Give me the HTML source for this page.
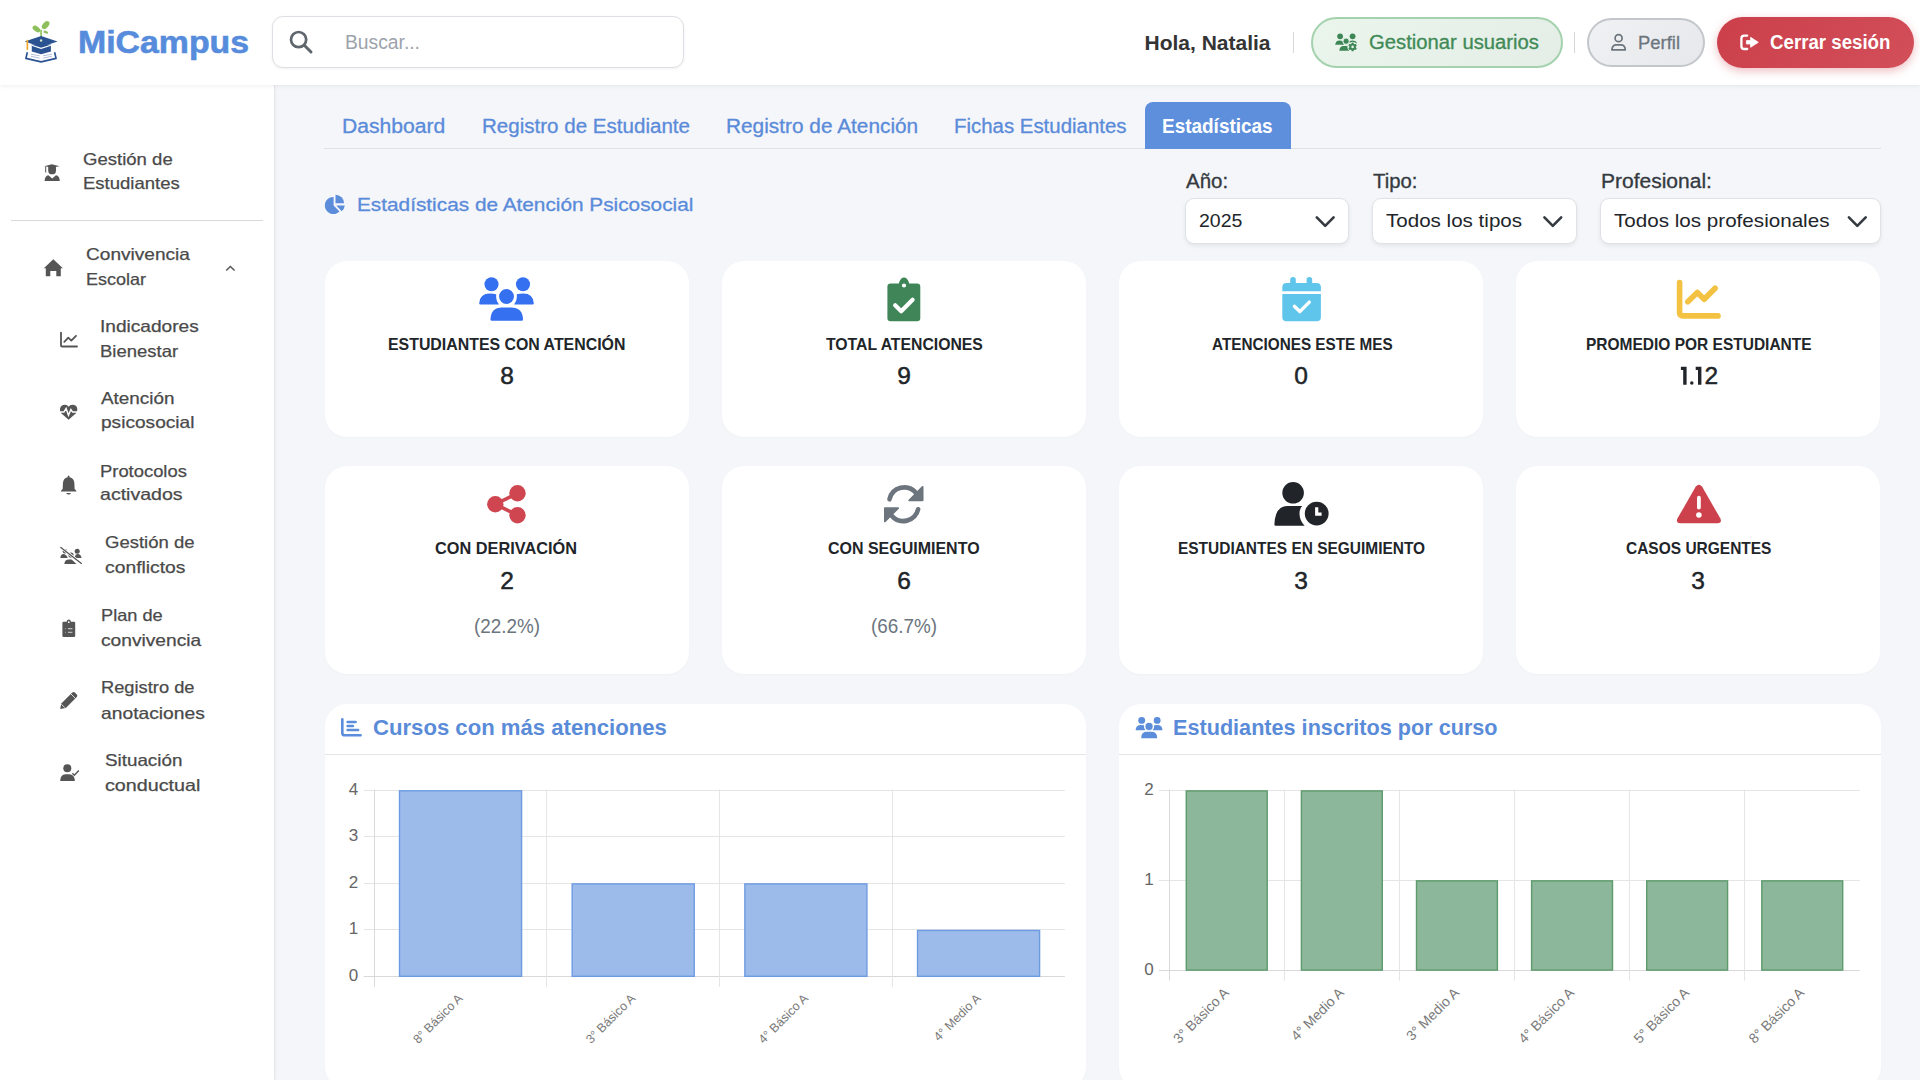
<!DOCTYPE html>
<html lang="es"><head><meta charset="utf-8"><title>MiCampus - Estadísticas</title>
<style>
html,body{margin:0;padding:0;}
body{width:1920px;height:1080px;overflow:hidden;position:relative;background:#f5f6fa;font-family:"Liberation Sans",sans-serif;}
#header{position:absolute;left:0;top:0;width:1920px;height:85px;background:#fff;box-shadow:0 1px 4px rgba(0,0,0,0.07);z-index:2}
#sidebar{position:absolute;left:0;top:85px;width:274px;height:995px;background:#fff;border-right:1px solid #e4e6ea;box-shadow:1px 0 3px rgba(0,0,0,0.03);z-index:1}
.box,.sep{position:absolute;box-sizing:content-box;z-index:3}
.card{position:absolute;background:#fff;border-radius:22px;box-shadow:0 1px 3px rgba(0,0,0,0.02);z-index:1}
.t{position:absolute;white-space:nowrap;line-height:1;z-index:5;transform-origin:0 0}
#ov{position:absolute;left:0;top:0;z-index:4}
</style></head><body>
<div id="header"></div><div id="sidebar"></div><div class="sep" style="left:11px;top:220px;width:252px;height:1px;background:#d9d9d9"></div><div class="box" style="left:272px;top:16px;width:410px;height:50px;border:1px solid #dcdfe3;border-radius:11px;background:#fff;box-shadow:0 1px 3px rgba(0,0,0,0.06)"></div><div class="box" style="left:1293px;top:32px;width:1px;height:21px;background:#d6d6d6"></div><div class="box" style="left:1574px;top:32px;width:1px;height:21px;background:#d6d6d6"></div><div class="box" style="left:1311px;top:17px;width:248px;height:47px;border:2px solid #a5d2ae;border-radius:26px;background:linear-gradient(135deg,#eaf5ec,#e4eee7)"></div><div class="box" style="left:1587px;top:18px;width:114px;height:45px;border:2px solid #c3c7cb;border-radius:26px;background:linear-gradient(135deg,#f0f1f3,#e6e8eb)"></div><div class="box" style="left:1717px;top:17px;width:197px;height:51px;border-radius:26px;background:linear-gradient(135deg,#cb3f4a,#d24f5a);box-shadow:0 3px 10px rgba(207,68,79,0.35)"></div><div class="box" style="left:324px;top:148px;width:1557px;height:1px;background:#dee2e6"></div><div class="box" style="left:1145px;top:102px;width:146px;height:47px;background:#5d8fdd;border-radius:8px 8px 0 0"></div><div class="box" style="left:1185px;top:198px;width:162px;height:44px;border:1px solid #dfe2e6;border-radius:9px;background:#fff;box-shadow:0 2px 4px rgba(0,0,0,0.07)"></div><div class="box" style="left:1372px;top:198px;width:203px;height:44px;border:1px solid #dfe2e6;border-radius:9px;background:#fff;box-shadow:0 2px 4px rgba(0,0,0,0.07)"></div><div class="box" style="left:1600px;top:198px;width:279px;height:44px;border:1px solid #dfe2e6;border-radius:9px;background:#fff;box-shadow:0 2px 4px rgba(0,0,0,0.07)"></div><div class="card" style="left:325px;top:261px;width:364px;height:176px"></div><div class="card" style="left:325px;top:466px;width:364px;height:208px"></div><div class="card" style="left:722px;top:261px;width:364px;height:176px"></div><div class="card" style="left:722px;top:466px;width:364px;height:208px"></div><div class="card" style="left:1119px;top:261px;width:364px;height:176px"></div><div class="card" style="left:1119px;top:466px;width:364px;height:208px"></div><div class="card" style="left:1516px;top:261px;width:364px;height:176px"></div><div class="card" style="left:1516px;top:466px;width:364px;height:208px"></div><div class="card" style="left:325px;top:704px;width:761px;height:385px"></div><div class="card" style="left:1119px;top:704px;width:762px;height:385px"></div><div class="box" style="left:325px;top:754px;width:761px;height:1px;background:#e3e5e8"></div><div class="box" style="left:1119px;top:754px;width:762px;height:1px;background:#e3e5e8"></div><div class="t" style="left:78.00px;top:26.76px;font-size:31px;color:#578cdc;font-weight:700;transform:scaleX(1.0913);-webkit-text-stroke:0.6px #578cdc;">MiCampus</div><div class="t" style="left:345.00px;top:33.00px;font-size:19.5px;color:#9ca3ab;transform:scaleX(0.9881);">Buscar...</div><div class="t" style="left:1144.50px;top:31.63px;font-size:21px;color:#343434;font-weight:700;">Hola, Natalia</div><div class="t" style="left:1369.00px;top:32.90px;font-size:19.5px;color:#3f8a56;transform:scaleX(1.0385);-webkit-text-stroke:0.3px #3f8a56;">Gestionar usuarios</div><div class="t" style="left:1638.00px;top:32.62px;font-size:19px;color:#6c757d;transform:scaleX(0.9700);-webkit-text-stroke:0.3px #6c757d;">Perfil</div><div class="t" style="left:1769.60px;top:32.50px;font-size:19.5px;color:#ffffff;font-weight:700;transform:scaleX(0.9578);">Cerrar sesión</div><div class="t" style="left:83.30px;top:151.03px;font-size:16.5px;color:#4a4a4a;transform:scaleX(1.1241);-webkit-text-stroke:0.25px #4a4a4a;">Gestión de</div><div class="t" style="left:83.30px;top:175.03px;font-size:16.5px;color:#4a4a4a;transform:scaleX(1.1218);-webkit-text-stroke:0.25px #4a4a4a;">Estudiantes</div><div class="t" style="left:85.80px;top:245.53px;font-size:16.5px;color:#4a4a4a;transform:scaleX(1.1557);-webkit-text-stroke:0.25px #4a4a4a;">Convivencia</div><div class="t" style="left:85.80px;top:271.03px;font-size:16.5px;color:#4a4a4a;transform:scaleX(1.0909);-webkit-text-stroke:0.25px #4a4a4a;">Escolar</div><div class="t" style="left:100.30px;top:318.03px;font-size:16.5px;color:#4a4a4a;transform:scaleX(1.1571);-webkit-text-stroke:0.25px #4a4a4a;">Indicadores</div><div class="t" style="left:100.30px;top:343.23px;font-size:16.5px;color:#4a4a4a;transform:scaleX(1.1205);-webkit-text-stroke:0.25px #4a4a4a;">Bienestar</div><div class="t" style="left:100.60px;top:390.33px;font-size:16.5px;color:#4a4a4a;transform:scaleX(1.1449);-webkit-text-stroke:0.25px #4a4a4a;">Atención</div><div class="t" style="left:100.60px;top:414.03px;font-size:16.5px;color:#4a4a4a;transform:scaleX(1.1574);-webkit-text-stroke:0.25px #4a4a4a;">psicosocial</div><div class="t" style="left:99.90px;top:462.83px;font-size:16.5px;color:#4a4a4a;transform:scaleX(1.1141);-webkit-text-stroke:0.25px #4a4a4a;">Protocolos</div><div class="t" style="left:99.90px;top:486.03px;font-size:16.5px;color:#4a4a4a;transform:scaleX(1.1851);-webkit-text-stroke:0.25px #4a4a4a;">activados</div><div class="t" style="left:104.50px;top:534.03px;font-size:16.5px;color:#4a4a4a;transform:scaleX(1.1216);-webkit-text-stroke:0.25px #4a4a4a;">Gestión de</div><div class="t" style="left:104.50px;top:559.03px;font-size:16.5px;color:#4a4a4a;transform:scaleX(1.1701);-webkit-text-stroke:0.25px #4a4a4a;">conflictos</div><div class="t" style="left:100.50px;top:606.73px;font-size:16.5px;color:#4a4a4a;transform:scaleX(1.1018);-webkit-text-stroke:0.25px #4a4a4a;">Plan de</div><div class="t" style="left:100.50px;top:631.73px;font-size:16.5px;color:#4a4a4a;transform:scaleX(1.1624);-webkit-text-stroke:0.25px #4a4a4a;">convivencia</div><div class="t" style="left:100.50px;top:679.03px;font-size:16.5px;color:#4a4a4a;transform:scaleX(1.1078);-webkit-text-stroke:0.25px #4a4a4a;">Registro de</div><div class="t" style="left:100.50px;top:704.83px;font-size:16.5px;color:#4a4a4a;transform:scaleX(1.1674);-webkit-text-stroke:0.25px #4a4a4a;">anotaciones</div><div class="t" style="left:104.50px;top:752.03px;font-size:16.5px;color:#4a4a4a;transform:scaleX(1.1399);-webkit-text-stroke:0.25px #4a4a4a;">Situación</div><div class="t" style="left:104.50px;top:776.83px;font-size:16.5px;color:#4a4a4a;transform:scaleX(1.1955);-webkit-text-stroke:0.25px #4a4a4a;">conductual</div><div class="t" style="left:342.40px;top:115.67px;font-size:20px;color:#5a8bd9;transform:scaleX(1.0552);-webkit-text-stroke:0.3px #5a8bd9;">Dashboard</div><div class="t" style="left:481.70px;top:115.67px;font-size:20px;color:#5a8bd9;transform:scaleX(1.0277);-webkit-text-stroke:0.3px #5a8bd9;">Registro de Estudiante</div><div class="t" style="left:725.80px;top:115.67px;font-size:20px;color:#5a8bd9;transform:scaleX(1.0412);-webkit-text-stroke:0.3px #5a8bd9;">Registro de Atención</div><div class="t" style="left:953.50px;top:115.67px;font-size:20px;color:#5a8bd9;transform:scaleX(1.0207);-webkit-text-stroke:0.3px #5a8bd9;">Fichas Estudiantes</div><div class="t" style="left:1162.40px;top:115.67px;font-size:20px;color:#ffffff;font-weight:700;transform:scaleX(0.9477);">Estadísticas</div><div class="t" style="left:356.70px;top:195.17px;font-size:19px;color:#5a8bd9;transform:scaleX(1.0944);-webkit-text-stroke:0.3px #5a8bd9;">Estadísticas de Atención Psicosocial</div><div class="t" style="left:1185.70px;top:172.20px;font-size:19.5px;color:#343a40;transform:scaleX(1.0499);-webkit-text-stroke:0.3px #343a40;">Año:</div><div class="t" style="left:1372.70px;top:172.20px;font-size:19.5px;color:#343a40;transform:scaleX(1.0399);-webkit-text-stroke:0.3px #343a40;">Tipo:</div><div class="t" style="left:1600.80px;top:172.20px;font-size:19.5px;color:#343a40;transform:scaleX(1.0767);-webkit-text-stroke:0.3px #343a40;">Profesional:</div><div class="t" style="left:1198.70px;top:211.12px;font-size:19px;color:#212529;transform:scaleX(1.0260);">2025</div><div class="t" style="left:1385.50px;top:211.12px;font-size:19px;color:#212529;transform:scaleX(1.0827);">Todos los tipos</div><div class="t" style="left:1614.00px;top:211.12px;font-size:19px;color:#212529;transform:scaleX(1.0851);">Todos los profesionales</div><div class="t" style="left:387.80px;top:335.53px;font-size:16.5px;color:#212529;font-weight:700;transform:scaleX(0.9627);">ESTUDIANTES CON ATENCIÓN</div><div class="t" style="left:825.60px;top:335.53px;font-size:16.5px;color:#212529;font-weight:700;transform:scaleX(0.9561);">TOTAL ATENCIONES</div><div class="t" style="left:1211.60px;top:335.53px;font-size:16.5px;color:#212529;font-weight:700;transform:scaleX(0.9267);">ATENCIONES ESTE MES</div><div class="t" style="left:1586.00px;top:335.53px;font-size:16.5px;color:#212529;font-weight:700;transform:scaleX(0.9392);">PROMEDIO POR ESTUDIANTE</div><div class="t" style="left:435.40px;top:540.23px;font-size:16.5px;color:#212529;font-weight:700;transform:scaleX(0.9882);">CON DERIVACIÓN</div><div class="t" style="left:827.80px;top:540.23px;font-size:16.5px;color:#212529;font-weight:700;transform:scaleX(0.9687);">CON SEGUIMIENTO</div><div class="t" style="left:1177.80px;top:540.23px;font-size:16.5px;color:#212529;font-weight:700;transform:scaleX(0.9370);">ESTUDIANTES EN SEGUIMIENTO</div><div class="t" style="left:1626.00px;top:540.23px;font-size:16.5px;color:#212529;font-weight:700;transform:scaleX(0.9387);">CASOS URGENTES</div><div class="t" style="left:500.20px;top:363.76px;font-size:24.5px;color:#212529;-webkit-text-stroke:0.5px #212529;">8</div><div class="t" style="left:897.20px;top:363.76px;font-size:24.5px;color:#212529;-webkit-text-stroke:0.5px #212529;">9</div><div class="t" style="left:1294.20px;top:363.76px;font-size:24.5px;color:#212529;-webkit-text-stroke:0.5px #212529;">0</div><div class="t" style="left:1704.40px;top:363.86px;font-size:24.5px;color:#212529;-webkit-text-stroke:0.5px #212529;">2</div><div class="t" style="left:500.20px;top:568.86px;font-size:24.5px;color:#212529;-webkit-text-stroke:0.5px #212529;">2</div><div class="t" style="left:897.20px;top:568.86px;font-size:24.5px;color:#212529;-webkit-text-stroke:0.5px #212529;">6</div><div class="t" style="left:1294.20px;top:568.86px;font-size:24.5px;color:#212529;-webkit-text-stroke:0.5px #212529;">3</div><div class="t" style="left:1691.20px;top:568.86px;font-size:24.5px;color:#212529;-webkit-text-stroke:0.5px #212529;">3</div><div class="t" style="left:473.60px;top:616.07px;font-size:20px;color:#6c757d;transform:scaleX(0.9429);">(22.2%)</div><div class="t" style="left:871.00px;top:616.07px;font-size:20px;color:#6c757d;transform:scaleX(0.9429);">(66.7%)</div><div class="t" style="left:373.20px;top:716.68px;font-size:22px;color:#5a8bd9;font-weight:700;transform:scaleX(1.0055);">Cursos con más atenciones</div><div class="t" style="left:1173.40px;top:716.68px;font-size:22px;color:#5a8bd9;font-weight:700;transform:scaleX(0.9833);">Estudiantes inscritos por curso</div>
<svg id="ov" width="1920" height="1080" viewBox="0 0 1920 1080" font-family="Liberation Sans, sans-serif"><g transform="translate(20,15) scale(0.04907)"><ellipse cx="335" cy="285" rx="88" ry="52" transform="rotate(35 335 285)" fill="#8dc05c"/><ellipse cx="522" cy="205" rx="95" ry="58" transform="rotate(-48 522 205)" fill="#8dc05c"/><ellipse cx="525" cy="350" rx="50" ry="26" transform="rotate(25 525 350)" fill="#8dc05c"/><path d="M430 300 V520" stroke="#8dc05c" stroke-width="34"/><path d="M150 760 L430 800 L705 760 L735 885 L430 955 L120 885 Z" fill="#ffffff"/><path d="M150 760 L120 885 L430 955 L735 885 L705 760" fill="none" stroke="#2c5391" stroke-width="34" stroke-linejoin="round"/><path d="M220 800 L400 830 M220 840 L400 880 M470 830 L650 800 M470 880 L650 840" stroke="#a8b8d4" stroke-width="18"/><path d="M240 600 L630 600 L630 745 L430 800 L240 745 Z" fill="#2c5391"/><path d="M95 540 L430 430 L765 540 L430 650 Z" fill="#2c5391"/><path d="M240 615 L430 680 L630 615" stroke="#ffffff" stroke-width="22" fill="none"/><circle cx="430" cy="520" r="24" fill="#d8e8c8"/><path d="M150 520 V700" stroke="#f0a830" stroke-width="34" stroke-linecap="round"/></g><circle cx="298.6" cy="39.6" r="7.6" fill="none" stroke="#5f666d" stroke-width="2.7"/><path d="M304.3 45.3 L311 52" stroke="#5f666d" stroke-width="3" stroke-linecap="round"/><g fill="#3d8757"><circle cx="1340.1" cy="36.3" r="2.9"/><circle cx="1352.6" cy="36.3" r="2.9"/><path d="M1335.2 44.8 Q1335.6 40.4 1339.5 40.4 Q1341.6 40.4 1342.6 41.2 Q1342.8 43.5 1344 44.8 Z"/><path d="M1348.6 44.2 Q1349.6 43 1349.7 41 Q1350.7 40.4 1352.7 40.4 Q1356.4 40.4 1357 43.6 Z"/><circle cx="1346.1" cy="41.2" r="3.1" stroke="#e8f2ea" stroke-width="0.9"/><path d="M1339.3 50.8 Q1339.6 45.9 1343.5 45.9 L1348.6 45.9 Q1347.6 48.6 1349.8 50.8 Z"/></g><circle cx="1352.6" cy="46.9" r="5.2" fill="#e8f2ea"/><g transform="translate(1352.6 46.9)" fill="#3d8757"><circle r="3.2"/><rect x="-1.1" y="-4.3" width="2.2" height="2" rx="0.4" transform="rotate(0)"/><rect x="-1.1" y="-4.3" width="2.2" height="2" rx="0.4" transform="rotate(60)"/><rect x="-1.1" y="-4.3" width="2.2" height="2" rx="0.4" transform="rotate(120)"/><rect x="-1.1" y="-4.3" width="2.2" height="2" rx="0.4" transform="rotate(180)"/><rect x="-1.1" y="-4.3" width="2.2" height="2" rx="0.4" transform="rotate(240)"/><rect x="-1.1" y="-4.3" width="2.2" height="2" rx="0.4" transform="rotate(300)"/><circle r="1.3" fill="#e8f2ea"/></g><circle cx="1618.6" cy="38.2" r="3.5" fill="none" stroke="#6c757d" stroke-width="1.7"/><path d="M1611.9 49.9 Q1612.3 44.9 1616.3 44.9 H1620.9 Q1625 44.9 1625.3 49.9 Z" fill="none" stroke="#6c757d" stroke-width="1.7" stroke-linejoin="round"/><path d="M1747.2 35.6 H1744.2 Q1741.4 35.6 1741.4 38.4 V46.2 Q1741.4 49 1744.2 49 H1747.2" fill="none" stroke="#fff" stroke-width="2.3" stroke-linecap="round"/><path d="M1746.4 40.6 H1750.6 V37.3 L1758.3 42.3 L1750.6 47.3 V44 H1746.4 Z" fill="#fff" stroke="#fff" stroke-width="0.8" stroke-linejoin="round"/><g fill="#555555"><path d="M44.2 166.2 L51.9 164.2 L59.6 166.2 L51.9 167.6 Z"/><path d="M48.2 166.6 H56 V170.4 A3.9 3.9 0 0 1 48.2 170.4 Z"/><path d="M45.2 166.4 H46.2 V172.4 H45.2 Z"/><path d="M44.6 181 Q44.8 175.6 48.4 175.2 L52.2 178.6 L56 175.2 Q59.6 175.6 59.8 181 Z"/><path d="M43.8 268.3 L53.3 259.2 L62.9 268.3 L60.8 268.3 L60.8 276.2 L56.3 276.2 L56.3 271 L50.3 271 L50.3 276.2 L45.8 276.2 L45.8 268.3 Z"/><path d="M68.6 475.6 Q69.6 475.6 69.6 477.2 Q74.2 478.2 74.4 483.5 L74.6 488.8 L76.4 491 V491.6 H60.9 V491 L62.7 488.8 L62.9 483.5 Q63.1 478.2 67.6 477.2 Q67.6 475.6 68.6 475.6 Z"/><path d="M66.3 492.9 H70.9 Q70.5 494.6 68.6 494.6 Q66.7 494.6 66.3 492.9 Z"/><path d="M61.2 413.2 Q59.6 411.4 60 408.8 Q60.8 404.8 65 404.8 Q67.4 404.8 68.6 406.8 Q69.8 404.8 72.4 404.8 Q76.8 404.8 77.3 408.8 Q77.6 411.4 76 413.2 L68.6 419.8 Z"/><path d="M63.6 621.8 H66.5 Q67.2 619.6 68.8 619.6 Q70.4 619.6 71.1 621.8 H74 Q75.2 621.8 75.2 623 V635.8 Q75.2 637 74 637 H63.6 Q62.4 637 62.4 635.8 V623 Q62.4 621.8 63.6 621.8 Z"/><path d="M60.2 709 L61.3 703.4 L72.3 692.5 Q73.6 691.3 74.9 692.5 L76.8 694.4 Q78 695.7 76.8 697 L65.8 707.9 Z"/><circle cx="67.3" cy="768.2" r="4"/><path d="M60.2 781 Q60.4 774.2 65.5 774.2 H69.2 Q74.6 774.2 74.9 781 Z"/><circle cx="65" cy="551.2" r="2.3"/><circle cx="77.2" cy="551.2" r="2.5"/><circle cx="71" cy="555" r="2.6"/><path d="M60.3 558 Q60.8 554 63.4 554 Q66 554 67.6 557.5 V558 Z"/><path d="M74.5 558 Q75.3 554 77.5 554 Q81 554 81.5 558 Z"/><path d="M64.3 564 Q64.8 559.6 68.8 559.6 H71.6 L76.5 564 Z"/></g><path d="M61.3 405 " /><path d="M58.8 412.1 H63.9 L66.1 408.4 L68.5 415.2 L70.9 409.5 L72.6 412.1 H79" fill="none" stroke="#fff" stroke-width="1.5" stroke-linejoin="miter"/><circle cx="68.8" cy="622.2" r="0.9" fill="#fff"/><path d="M65.3 628.7 H65.9 M68 628.7 H72.4 M65.3 632.3 H65.9 M68 632.3 H72.4" stroke="#bbb" stroke-width="1.3"/><path d="M61.4 704.2 L64.9 707.7 M71 694 L75.6 698.6" stroke="#fff" stroke-width="0.8"/><path d="M72.4 773.2 L74.4 775.2 L78.8 770.6" fill="none" stroke="#555" stroke-width="1.4"/><path d="M60.8 547.4 L81.4 563.4" stroke="#fff" stroke-width="2.6"/><path d="M60.8 547.4 L81.4 563.4" stroke="#555" stroke-width="1.3" stroke-linecap="round"/><path d="M226.2 270.6 L230.4 266.4 L234.6 270.6" fill="none" stroke="#555" stroke-width="1.4"/><path d="M61 332.6 V345.4 Q61 346.5 62.1 346.5 H77" fill="none" stroke="#555" stroke-width="1.8" stroke-linecap="round"/><path d="M64.3 341.8 L68.3 337.6 L71.3 340.6 L76 335.8" fill="none" stroke="#555" stroke-width="1.8" stroke-linecap="round" stroke-linejoin="round"/><g fill="#5b8ddb"><path d="M333.6 205.4 V196.9 A8.6 8.6 0 1 0 339.5 211.6 Z"/><path d="M335.5 203.3 V194.7 A8.6 8.6 0 0 1 344.1 203.3 Z"/><path d="M336.3 205.4 H344.7 A8.6 8.6 0 0 1 341.7 211.3 Z"/></g><path d="M1316.8 217.4 L1325.2 225.8 L1333.6 217.4" fill="none" stroke="#343a40" stroke-width="2.6" stroke-linecap="round" stroke-linejoin="round"/><path d="M1544.4 217.4 L1552.8000000000002 225.8 L1561.2 217.4" fill="none" stroke="#343a40" stroke-width="2.6" stroke-linecap="round" stroke-linejoin="round"/><path d="M1848.9 217.4 L1857.3000000000002 225.8 L1865.7 217.4" fill="none" stroke="#343a40" stroke-width="2.6" stroke-linecap="round" stroke-linejoin="round"/><g transform="translate(474,272) scale(1)" fill="#3470f0"><circle cx="17.5" cy="12.25" r="7"/><circle cx="49" cy="12.25" r="7"/><path d="M5.2 31.3 Q5.8 21.5 15.8 21.5 Q19.6 21.5 22.2 22.3 Q21.6 28.5 25 32.5 H6.4 Q5.2 32.5 5.2 31.3 Z"/><path d="M40 32.5 Q43.4 28.5 42.8 22.3 Q45.4 21.5 49.2 21.5 Q59.2 21.5 59.8 31.3 Q59.8 32.5 58.6 32.5 Z"/><circle cx="32.5" cy="24.5" r="8.25" stroke="#fff" stroke-width="1.6"/><path d="M16.5 47.5 Q16.8 35.5 28 35.5 H37 Q48.8 35.5 49 47.5 Q49 48.8 47.7 48.8 H17.8 Q16.5 48.8 16.5 47.5 Z"/></g><path d="M890.6 283.4 H898.8 Q900.5 277.5 904 277.5 Q907.5 277.5 909.2 283.4 H917.1 Q920.3 283.4 920.3 286.6 V318.1 Q920.3 321.3 917.1 321.3 H890.6 Q887.4 321.3 887.4 318.1 V286.6 Q887.4 283.4 890.6 283.4 Z" fill="#3f8558"/><circle cx="904" cy="285.5" r="2.1" fill="#fff"/><path d="M895.2 305.2 L901.2 311.2 L912.6 299.8" fill="none" stroke="#fff" stroke-width="4.2" stroke-linecap="round" stroke-linejoin="round"/><g fill="#5fc5eb"><rect x="1290.2" y="277" width="5.6" height="9" rx="2.8"/><rect x="1306.6" y="277" width="5.6" height="9" rx="2.8"/><path d="M1286.6 283 H1316.6 Q1320.9 283 1320.9 287.3 V291.3 H1282.3 V287.3 Q1282.3 283 1286.6 283 Z"/><path d="M1282.3 294 H1320.9 V317 Q1320.9 321.3 1316.6 321.3 H1286.6 Q1282.3 321.3 1282.3 317 Z"/></g><path d="M1294.4 306.2 L1299.8 311.6 L1309.3 302.1" fill="none" stroke="#fff" stroke-width="3.4" stroke-linecap="round" stroke-linejoin="round"/><path d="M1679.6 282.6 V312.6 Q1679.6 315.9 1682.9 315.9 H1718" fill="none" stroke="#f3c242" stroke-width="5.6" stroke-linecap="round" stroke-linejoin="round"/><path d="M1687.8 301.8 L1697.3 292.4 L1704.2 299.3 L1715.1 288.2" fill="none" stroke="#f3c242" stroke-width="5.6" stroke-linecap="round" stroke-linejoin="round"/><g fill="#cf4650"><circle cx="517.5" cy="493.2" r="8.2"/><circle cx="517.5" cy="515.2" r="8.2"/><circle cx="495.3" cy="504.2" r="8.2"/></g><path d="M517.5 493.2 L495.3 504.2 L517.5 515.2" fill="none" stroke="#cf4650" stroke-width="3.6"/><g transform="translate(903.75 504.2) scale(0.93) translate(-903.75 -504.2)"><path d="M888.4 498.9 A16.4 16.4 0 0 1 916.8 491.8" fill="none" stroke="#6c757d" stroke-width="5" stroke-linecap="round"/><path d="M909.7 500 L924 500 L924 485.7 Z" fill="#6c757d" stroke="#6c757d" stroke-width="2" stroke-linejoin="round"/><path d="M919.2 509.7 A16.4 16.4 0 0 1 890.8 516.6" fill="none" stroke="#6c757d" stroke-width="5" stroke-linecap="round"/><path d="M897.7 508.5 L883.5 508.5 L883.5 522.7 Z" fill="#6c757d" stroke="#6c757d" stroke-width="2" stroke-linejoin="round"/></g><circle cx="1293.1" cy="492.8" r="10.8" fill="#212529"/><path d="M1274.4 524.6 Q1275 506 1287.6 506 H1302.2 Q1299.5 509 1299.5 513.6 Q1299.5 520.5 1304.6 525.8 H1275.6 Q1274.4 525.8 1274.4 524.6 Z" fill="#212529"/><circle cx="1316.7" cy="513.6" r="11.9" fill="#212529"/><path d="M1316.7 507.2 V514.2 H1321.6" fill="none" stroke="#fff" stroke-width="3.2"/><path d="M1695.8 486.6 Q1698.9 482.8 1702 486.6 L1720.4 518.6 Q1722.2 523.3 1717.6 523.3 H1680.2 Q1675.6 523.3 1677.4 518.6 Z" fill="#cc414b"/><rect x="1697" y="495.8" width="3.8" height="13.6" rx="1.9" fill="#fff"/><circle cx="1698.9" cy="515" r="2.8" fill="#fff"/><path d="M1680.9 366.7 H1686.6000000000001 V384.8 H1683.2 V369.9 H1680.9 Z" fill="#212529"/><path d="M1695.7 366.7 H1701.4 V384.8 H1698.0 V369.9 H1695.7 Z" fill="#212529"/><circle cx="1691.8" cy="383.1" r="1.75" fill="#212529"/><path d="M342.3 719.2 V732.7 Q342.3 735.3 344.9 735.3 H360.6" fill="none" stroke="#5b8ddb" stroke-width="2.6" stroke-linecap="round"/><path d="M347.6 721.9 H355.6 M347.6 726 H352.9 M347.6 730 H358.1" fill="none" stroke="#5b8ddb" stroke-width="2.5" stroke-linecap="round"/><g transform="translate(1133.1,714.4) scale(0.491)" fill="#5b8ddb"><circle cx="17.5" cy="12.25" r="7"/><circle cx="49" cy="12.25" r="7"/><path d="M5.2 31.3 Q5.8 21.5 15.8 21.5 Q19.6 21.5 22.2 22.3 Q21.6 28.5 25 32.5 H6.4 Q5.2 32.5 5.2 31.3 Z"/><path d="M40 32.5 Q43.4 28.5 42.8 22.3 Q45.4 21.5 49.2 21.5 Q59.2 21.5 59.8 31.3 Q59.8 32.5 58.6 32.5 Z"/><circle cx="32.5" cy="24.5" r="8.25" stroke="#fff" stroke-width="1.6"/><path d="M16.5 47.5 Q16.8 35.5 28 35.5 H37 Q48.8 35.5 49 47.5 Q49 48.8 47.7 48.8 H17.8 Q16.5 48.8 16.5 47.5 Z"/></g><path d="M363.7 976.5 H1064.9" stroke="#d9d9d9" stroke-width="1"/><text x="358.3" y="980.8" font-size="17" fill="#666666" text-anchor="end">0</text><path d="M363.7 929.5 H1064.9" stroke="#e5e5e5" stroke-width="1"/><text x="358.3" y="934.2" font-size="17" fill="#666666" text-anchor="end">1</text><path d="M363.7 883.5 H1064.9" stroke="#e5e5e5" stroke-width="1"/><text x="358.3" y="887.7" font-size="17" fill="#666666" text-anchor="end">2</text><path d="M363.7 836.5 H1064.9" stroke="#e5e5e5" stroke-width="1"/><text x="358.3" y="841.1" font-size="17" fill="#666666" text-anchor="end">3</text><path d="M363.7 790.5 H1064.9" stroke="#e5e5e5" stroke-width="1"/><text x="358.3" y="794.6" font-size="17" fill="#666666" text-anchor="end">4</text><path d="M374.5 789.6 V986.8" stroke="#d9d9d9" stroke-width="1"/><path d="M546.5 789.6 V986.8" stroke="#e5e5e5" stroke-width="1"/><path d="M719.5 789.6 V986.8" stroke="#e5e5e5" stroke-width="1"/><path d="M892.5 789.6 V986.8" stroke="#e5e5e5" stroke-width="1"/><rect x="399.51" y="790.80" width="122.06" height="185.50" fill="#9dbbea" stroke="#6d9be2" stroke-width="1.4"/><rect x="572.18" y="883.90" width="122.06" height="92.40" fill="#9dbbea" stroke="#6d9be2" stroke-width="1.4"/><rect x="744.86" y="883.90" width="122.06" height="92.40" fill="#9dbbea" stroke="#6d9be2" stroke-width="1.4"/><rect x="917.53" y="930.45" width="122.06" height="45.85" fill="#9dbbea" stroke="#6d9be2" stroke-width="1.4"/><text transform="translate(463.5,999.0) rotate(-45)" font-size="12.5" fill="#7a7a7a" text-anchor="end">8° Básico A</text><text transform="translate(636.2,999.0) rotate(-45)" font-size="12.5" fill="#7a7a7a" text-anchor="end">3° Básico A</text><text transform="translate(808.9,999.0) rotate(-45)" font-size="12.5" fill="#7a7a7a" text-anchor="end">4° Básico A</text><text transform="translate(981.6,999.0) rotate(-45)" font-size="12.5" fill="#7a7a7a" text-anchor="end">4° Medio A</text><path d="M1158.7 970.5 H1859.8" stroke="#d9d9d9" stroke-width="1"/><text x="1153.6" y="974.6" font-size="17" fill="#666666" text-anchor="end">0</text><path d="M1158.7 880.5 H1859.8" stroke="#e5e5e5" stroke-width="1"/><text x="1153.6" y="884.7" font-size="17" fill="#666666" text-anchor="end">1</text><path d="M1158.7 790.5 H1859.8" stroke="#e5e5e5" stroke-width="1"/><text x="1153.6" y="794.7" font-size="17" fill="#666666" text-anchor="end">2</text><path d="M1169.5 789.7 V980.6" stroke="#d9d9d9" stroke-width="1"/><path d="M1284.5 789.7 V980.6" stroke="#e5e5e5" stroke-width="1"/><path d="M1399.5 789.7 V980.6" stroke="#e5e5e5" stroke-width="1"/><path d="M1514.5 789.7 V980.6" stroke="#e5e5e5" stroke-width="1"/><path d="M1629.5 789.7 V980.6" stroke="#e5e5e5" stroke-width="1"/><path d="M1744.5 789.7 V980.6" stroke="#e5e5e5" stroke-width="1"/><rect x="1186.30" y="790.90" width="80.90" height="179.20" fill="#8cb79a" stroke="#5d9a6c" stroke-width="1.4"/><rect x="1301.40" y="790.90" width="80.90" height="179.20" fill="#8cb79a" stroke="#5d9a6c" stroke-width="1.4"/><rect x="1416.50" y="880.85" width="80.90" height="89.25" fill="#8cb79a" stroke="#5d9a6c" stroke-width="1.4"/><rect x="1531.60" y="880.85" width="80.90" height="89.25" fill="#8cb79a" stroke="#5d9a6c" stroke-width="1.4"/><rect x="1646.70" y="880.85" width="80.90" height="89.25" fill="#8cb79a" stroke="#5d9a6c" stroke-width="1.4"/><rect x="1761.80" y="880.85" width="80.90" height="89.25" fill="#8cb79a" stroke="#5d9a6c" stroke-width="1.4"/><text transform="translate(1229.8,993.6) rotate(-45)" font-size="14" fill="#7a7a7a" text-anchor="end">3° Básico A</text><text transform="translate(1344.8,993.6) rotate(-45)" font-size="14" fill="#7a7a7a" text-anchor="end">4° Medio A</text><text transform="translate(1460.0,993.6) rotate(-45)" font-size="14" fill="#7a7a7a" text-anchor="end">3° Medio A</text><text transform="translate(1575.0,993.6) rotate(-45)" font-size="14" fill="#7a7a7a" text-anchor="end">4° Básico A</text><text transform="translate(1690.2,993.6) rotate(-45)" font-size="14" fill="#7a7a7a" text-anchor="end">5° Básico A</text><text transform="translate(1805.2,993.6) rotate(-45)" font-size="14" fill="#7a7a7a" text-anchor="end">8° Básico A</text></svg>
</body></html>
